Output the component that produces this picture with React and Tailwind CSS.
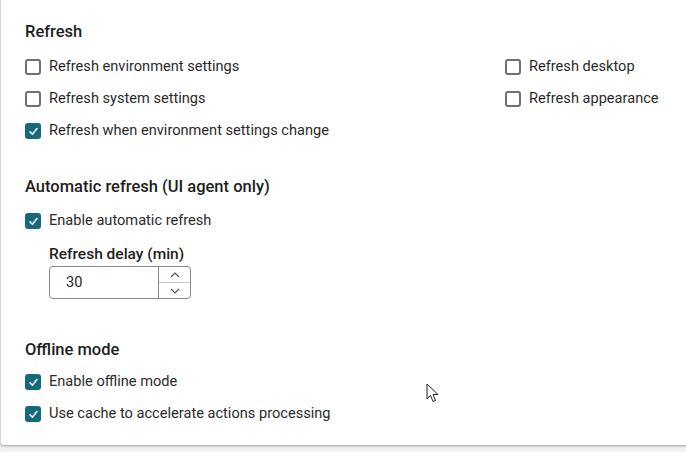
import React from 'react';

const Check = ({ checked, label }) => (
  <label className="flex items-center h-[32px] gap-[8px] text-[14.6px] text-[#2b2b2b]">
    {checked ? (
      <span className="w-[16px] h-[16px] shrink-0 rounded-[3px] bg-[#15697d] flex items-center justify-center">
        <svg width="11" height="11" viewBox="0 0 12 12" fill="none">
          <path d="M2.2 6.4 L4.8 9 L9.8 2.8" stroke="white" strokeWidth="1.6" strokeLinecap="round" strokeLinejoin="round" />
        </svg>
      </span>
    ) : (
      <span className="w-[16px] h-[16px] shrink-0 rounded-[3px] border-2 border-[#707070] bg-white" />
    )}
    <span>{label}</span>
  </label>
);

const Heading = ({ children }) => (
  <h3 className="text-[16.5px] font-medium text-[#1e1e1e] h-[24px] flex items-center">{children}</h3>
);

export default function App() {
  return (
    <div className="w-[686px] h-[452px] bg-[#f2f2f2] overflow-hidden" style={{ fontFamily: 'Roboto, "Liberation Sans", sans-serif' }}>
      <div className="w-[720px] h-[445px] bg-white border-l border-[#d6d6d6] rounded-bl-[4px] shadow-[0_1px_3px_rgba(0,0,0,0.35)] pl-[24px] pt-[20px] relative">
        <Heading>Refresh</Heading>
        <div className="mt-[7px] flex">
          <div className="w-[480px]">
            <Check label="Refresh environment settings" />
            <Check label="Refresh system settings" />
            <Check checked label="Refresh when environment settings change" />
          </div>
          <div>
            <Check label="Refresh desktop" />
            <Check label="Refresh appearance" />
          </div>
        </div>

        <div className="mt-[28px]">
          <Heading>Automatic refresh (UI agent only)</Heading>
        </div>
        <div className="mt-[6px]">
          <Check checked label="Enable automatic refresh" />
        </div>
        <div className="pl-[24px] mt-[6px]">
          <div className="text-[15.5px] font-medium text-[#1e1e1e] h-[24px] flex items-center">Refresh delay (min)</div>
          <div className="-mt-[1px] w-[142px] h-[33px] border border-[#8a8a8a] rounded-[4px] flex bg-white">
            <div className="flex-1 flex items-center pl-[16px] text-[14.6px] text-[#1e1e1e]">30</div>
            <div className="w-[32px] border-l border-[#8a8a8a] flex flex-col">
              <div className="flex-1 flex items-center justify-center border-b border-[#c8c8c8]">
                <svg width="10" height="6" viewBox="0 0 10 6" fill="none"><path d="M1 5 L5 1 L9 5" stroke="#555" strokeWidth="1.2" /></svg>
              </div>
              <div className="flex-1 flex items-center justify-center">
                <svg width="10" height="6" viewBox="0 0 10 6" fill="none"><path d="M1 1 L5 5 L9 1" stroke="#555" strokeWidth="1.2" /></svg>
              </div>
            </div>
          </div>
        </div>

        <div className="mt-[39px]">
          <Heading>Offline mode</Heading>
        </div>
        <div className="mt-[4px]">
          <Check checked label="Enable offline mode" />
          <Check checked label="Use cache to accelerate actions processing" />
        </div>

        <svg className="absolute left-[425px] top-[383px]" width="13" height="20" viewBox="0 0 13 20">
          <path d="M1 1 L1 16 L4.5 12.5 L7 18.5 L9.5 17.5 L7 11.5 L12 11.5 Z" fill="white" stroke="#222" strokeWidth="1" strokeLinejoin="round" />
        </svg>
      </div>
    </div>
  );
}
